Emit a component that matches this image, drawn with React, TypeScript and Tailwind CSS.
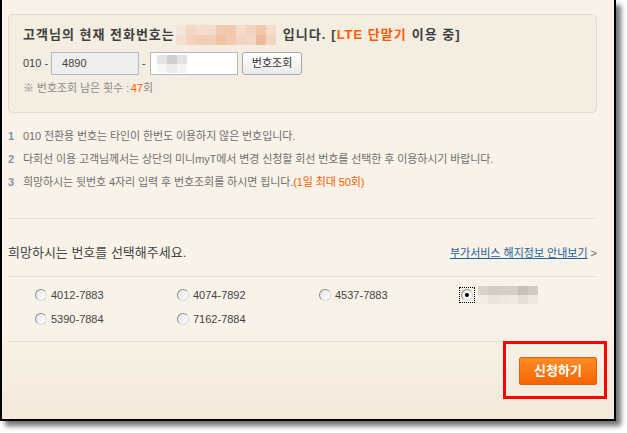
import React from "react";

const titleBlur = [
  ["#f6e6da", "#f3d8c8", "#f5dece", "#f1dccd", "#f1c9af", "#f0c7ab", "#f4dbca", "#f1d3be", "#f2c6a9", "#f5ddcc"],
  ["#f5dfcf", "#f3d3be", "#f1cdb5", "#f3cfb8", "#f0c3a5", "#f0cbb1", "#f0d4c0", "#f2d7c5", "#ecbb9e", "#f3d4c0"],
];
const inputBlur = [
  ["#e4e4e4", "#cfcfcf", "#e1e1e1"],
  ["#f6f6f6", "#ebebeb", "#f4f4f4"],
];
const radioBlur = [
  ["#d9d2c9", "#d3ccc2", "#d5cec6", "#d6cfc6", "#c8c0b7", "#d2cbc2"],
  ["#f2ece4", "#ebe4da", "#ede6dc", "#f0e9e0", "#e6dfd6", "#efe8df"],
];

function Blur({ rows, cell, h }: { rows: string[][]; cell: string; h: string }) {
  return (
    <span className="flex flex-col">
      {rows.map((r, i) => (
        <span key={i} className="flex">
          {r.map((c, j) => (
            <span key={j} className={`${cell} ${h} block`} style={{ backgroundColor: c }} />
          ))}
        </span>
      ))}
    </span>
  );
}

function Radio({ checked }: { checked?: boolean }) {
  return (
    <span
      className={
        checked
          ? "flex h-[14px] w-[14px] items-center justify-center outline-1 outline-dotted outline-black"
          : "flex h-[14px] w-[14px] items-center justify-center"
      }
    >
      <span className="flex h-[12px] w-[12px] items-center justify-center rounded-full border border-[#8c8c8c] border-b-[#d8d8d8] border-r-[#d8d8d8] bg-gradient-to-br from-[#e4e4e4] to-white">
        {checked && <span className="h-[4px] w-[4px] rounded-full bg-black" />}
      </span>
    </span>
  );
}

export default function App() {
  const numbers: (string | null)[] = ["4012-7883", "4074-7892", "4537-7883", null, "5390-7884", "7162-7884"];
  return (
    <div className="relative h-[433px] w-[627px] overflow-hidden bg-white font-[family-name:Liberation_Sans,Noto_Sans_CJK_KR,sans-serif]">
      <div className="flex h-[421px] w-[616px] flex-col border-x-2 border-b-2 border-black bg-[linear-gradient(to_bottom,#f8f2e8_0%,#f8f2e8_78%,#f2e9da_100%)] pl-[6px] pr-[17px] shadow-[5px_5px_5px_rgba(0,0,0,0.55)]">
        {/* info panel */}
        <div className="mt-[14px] h-[99px] shrink-0 rounded-[5px] border border-[#e2dacb] bg-[#f4ede1] pl-[14px] pt-[10px]">
          <div className="flex h-[20px] items-center text-[13px] font-bold tracking-[1px] text-[#3f3f3f]">
            <span>고객님의 현재 전화번호는</span>
            <span className="ml-[1px] mr-[7px]">
              <Blur rows={titleBlur} cell="w-[10px]" h="h-[10px]" />
            </span>
            <span>입니다.</span>
            <span className="ml-[5px]">[</span>
            <span className="text-[#ff5a00]">LTE 단말기</span>
            <span className="ml-[5px]">이용 중]</span>
          </div>
          <div className="mt-[7px] flex h-[23px] items-center text-[11px] text-[#444]">
            <span>010 -</span>
            <span className="ml-[3px] flex h-[23px] w-[88px] items-center border border-[#b8b8b8] bg-[#eeeeee] pl-[10px]">4890</span>
            <span className="ml-[3px] w-[8px]">-</span>
            <span className="flex h-[23px] w-[88px] items-center border border-[#b8b8b8] bg-white pl-[6px]">
              <Blur rows={inputBlur} cell="w-[10px]" h="h-[9px]" />
            </span>
            <span className="ml-[4px] flex h-[23px] w-[60px] items-center justify-center rounded-[3px] border border-[#a9a9a9] bg-gradient-to-b from-white to-[#e9e9e9] text-[#333]">
              번호조회
            </span>
          </div>
          <div className="mt-[5px] flex h-[16px] items-center text-[11px] tracking-[-0.1px] text-[#8a8a8a]">
            <span>※ 번호조회 남은 횟수 : </span>
            <span className="ml-[2px] text-[#ff5a00]">47</span>
            <span>회</span>
          </div>
        </div>

        {/* notes */}
        <div className="mt-[15px] flex flex-col gap-[7px] text-[11px] tracking-[-0.1px] text-[#707070]">
          <div className="flex h-[16px] items-center">
            <span className="w-[15px] text-[11px] font-bold text-[#8393a7]">1</span>
            <span>010 전환용 번호는 타인이 한번도 이용하지 않은 번호입니다.</span>
          </div>
          <div className="flex h-[16px] items-center">
            <span className="w-[15px] text-[11px] font-bold text-[#8393a7]">2</span>
            <span>다회선 이용 고객님께서는 상단의 미니myT에서 변경 신청할 회선 번호를 선택한 후 이용하시기 바랍니다.</span>
          </div>
          <div className="flex h-[16px] items-center">
            <span className="w-[15px] text-[11px] font-bold text-[#8393a7]">3</span>
            <span>희망하시는 뒷번호 4자리 입력 후 번호조회를 하시면 됩니다.</span>
            <span className="text-[#ff5a00]">(1일 최대 50회)</span>
          </div>
        </div>

        <div className="mt-[28px] border-t border-[#e7dfd1]" />

        <div className="mt-[24px] flex h-[20px] items-center justify-between">
          <span className="text-[13px] text-[#444]">희망하시는 번호를 선택해주세요.</span>
          <span className="flex items-center text-[11px]">
            <span className="text-[#1f5f9c] underline">부가서비스 해지정보 안내보기</span>
            <span className="ml-[3px] text-[#666]">&gt;</span>
          </span>
        </div>

        <div className="mt-[13px] border-t border-[#e7dfd1]" />

        <div className="mt-[10px] grid grid-cols-[142px_142px_142px_142px] gap-y-[8px] pl-[26px] text-[11px] text-[#444]">
          {numbers.map((n, i) => (
            <div key={i} className="flex h-[16px] items-center gap-[3px]">
              <Radio checked={n === null} />
              {n === null ? (
                <span className="ml-[1px]">
                  <Blur rows={radioBlur} cell="w-[10px]" h="h-[9px]" />
                </span>
              ) : (
                <span>{n}</span>
              )}
            </div>
          ))}
        </div>

        <div className="mt-[14px] border-t border-[#e7dfd1]" />

        <div className="mt-[15px] flex justify-end">
          <span className="flex h-[28px] w-[78px] items-center justify-center rounded-[2px] border border-[#e0620f] bg-gradient-to-b from-[#ff8c22] to-[#f56400] text-[13px] font-bold text-white">
            신청하기
          </span>
        </div>
      </div>

      {/* annotation */}
      <div className="absolute left-[503px] top-[341px] h-[58px] w-[104px] border-[3px] border-[#ff0000]" />
    </div>
  );
}
